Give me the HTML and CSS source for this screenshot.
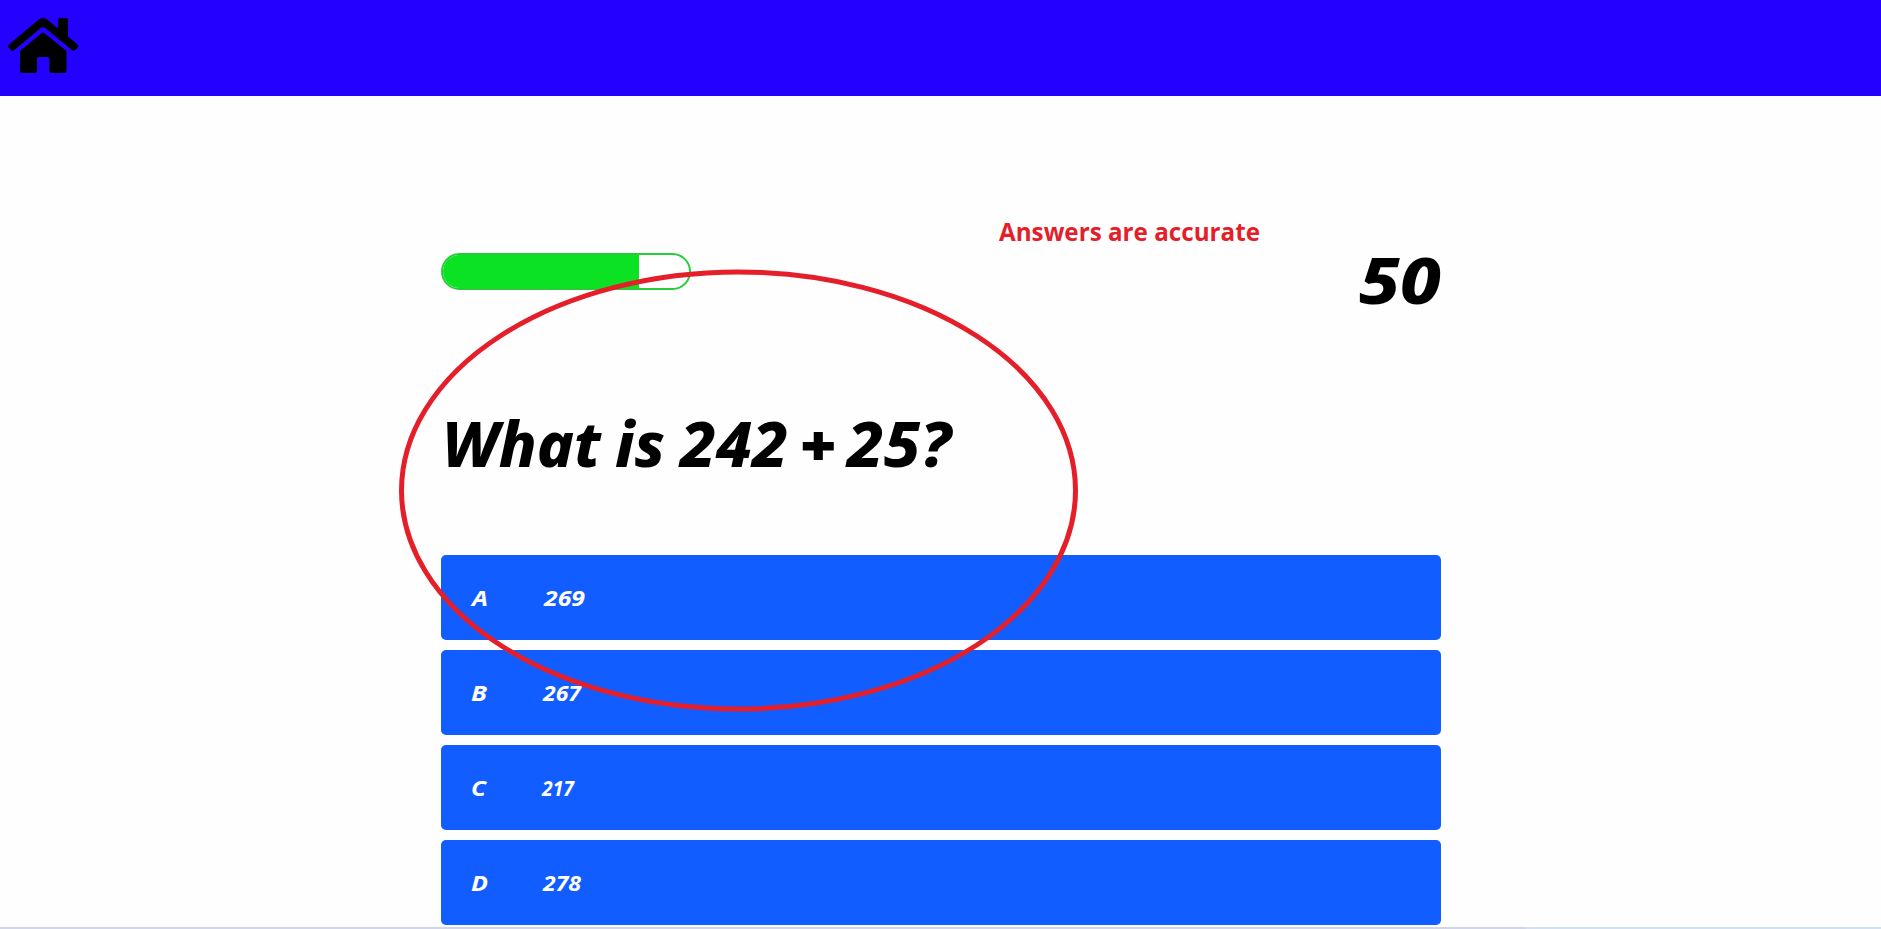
FILE: index.html
```
<!DOCTYPE html>
<html lang="en">
<head>
<meta charset="utf-8">
<title>Quiz</title>
<link rel="stylesheet" href="styles.css">
</head>
<body>
<header class="topbar">
  <svg class="home" viewBox="0 0 70 55">
    <path class="roof" d="M1 26.5 L30.5 1.8 Q35 -1.6 39.5 1.8 L50 10.5 V2 Q50 0 52 0 H58 Q60 0 60 2 V18.5 L69.5 26.5 Q70.8 27.8 69.8 29.2 L67 32.2 Q65.7 33.2 64.2 32.2 L37.5 10.2 Q35 8.3 32.5 10.2 L6 32.2 Q4.5 33.2 3.2 32.2 L0.5 29.2 Q-0.6 27.8 1 26.5Z"/>
    <path d="M12 33 L33.5 15.2 Q35 14 36.5 15.2 L58.5 33 V53 Q58.5 55 56.5 55 H43.3 Q41.3 55 41.3 53 V41 Q41.3 39 39.3 39 H31 Q29 39 29 41 V53 Q29 55 27 55 H14 Q12 55 12 53Z"/>
  </svg>
</header>
<main class="quiz">
  <div class="status">
    <div class="progress"><div class="progress-fill" style="width:196px"></div></div>
    <svg class="score" viewBox="0 0 84 60"><text x="2" y="51" textLength="82" lengthAdjust="spacingAndGlyphs">50</text></svg>
  </div>
  <svg class="question" viewBox="0 0 520 70">
    <text x="-2" y="56.5" textLength="159" lengthAdjust="spacingAndGlyphs">What</text>
    <text x="171" y="56.5" textLength="50" lengthAdjust="spacingAndGlyphs">is</text>
    <text x="236" y="56.5" textLength="108" lengthAdjust="spacingAndGlyphs">242</text>
    <text class="plus" x="357" y="55" textLength="34" lengthAdjust="spacingAndGlyphs">+</text>
    <text x="403" y="56.5" textLength="104" lengthAdjust="spacingAndGlyphs">25?</text>
  </svg>
  <div class="choices">
    <div class="choice"><svg class="letter" viewBox="0 0 69 30"><text x="0" y="23" textLength="16" lengthAdjust="spacingAndGlyphs">A</text></svg><svg class="answer" viewBox="0 0 60 30"><text x="3" y="23" textLength="41" lengthAdjust="spacingAndGlyphs">269</text></svg></div>
    <div class="choice"><svg class="letter" viewBox="0 0 69 30"><text x="-1" y="23" textLength="16" lengthAdjust="spacingAndGlyphs">B</text></svg><svg class="answer" viewBox="0 0 60 30"><text x="2" y="23" textLength="38" lengthAdjust="spacingAndGlyphs">267</text></svg></div>
    <div class="choice"><svg class="letter" viewBox="0 0 69 30"><text x="-1" y="23" textLength="15" lengthAdjust="spacingAndGlyphs">C</text></svg><svg class="answer" viewBox="0 0 60 30"><text x="1" y="23" textLength="32" lengthAdjust="spacingAndGlyphs">217</text></svg></div>
    <div class="choice"><svg class="letter" viewBox="0 0 69 30"><text x="-1" y="23" textLength="17" lengthAdjust="spacingAndGlyphs">D</text></svg><svg class="answer" viewBox="0 0 60 30"><text x="2" y="23" textLength="38" lengthAdjust="spacingAndGlyphs">278</text></svg></div>
  </div>
</main>
<footer class="edge"><div class="edge-end"></div></footer>
<svg class="note" viewBox="0 0 1881 929">
  <ellipse cx="738.5" cy="490.5" rx="337" ry="218.5"/>
  <text x="999" y="241" textLength="261" lengthAdjust="spacingAndGlyphs">Answers are accurate</text>
</svg>
</body>
</html>
```
FILE: styles.css
```
* { box-sizing: border-box; }
body {
  margin: 0;
  height: 929px;
  overflow: hidden;
  display: flex;
  flex-direction: column;
  background: #fefefe;
  color: #000;
  font-family: "Noto Sans", "Open Sans", sans-serif;
}
.topbar {
  height: 96px;
  flex: none;
  padding: 18px 8px;
  background: #2400ff;
}
.home { display: block; width: 70px; height: 55px; overflow: visible; }
.quiz {
  width: 1000px;
  height: 831px;
  flex: none;
  margin-left: 441px;
  padding-top: 157px;
}
.status {
  display: flex;
  justify-content: space-between;
  align-items: flex-start;
}
.progress {
  width: 250px;
  height: 37px;
  border: 2px solid #27cc38;
  border-radius: 19px;
  overflow: hidden;
  background: #fff;
}
.progress-fill { height: 100%; background: #0ce224; }
.score {
  width: 84px;
  height: 60px;
  overflow: visible;
  font-size: 64px;
  font-weight: 800;
  font-style: italic;
}
.question {
  display: block;
  width: 520px;
  height: 70px;
  margin: 97px 0 75px 3px;
  overflow: visible;
  font-size: 63px;
  font-weight: 800;
  font-style: italic;
}
.plus { font-size: 54px; stroke: #000; stroke-width: 2; }
.choices { display: grid; gap: 10px; }
.choice {
  height: 85px;
  border-radius: 5px;
  padding-left: 31px;
  background: #115dff;
  color: #fff;
  display: flex;
  align-items: center;
  font-size: 21.5px;
  font-weight: 700;
  font-style: italic;
}
.letter { width: 69px; height: 30px; overflow: visible; fill: #fff; }
.answer { width: 60px; height: 30px; overflow: visible; fill: #fff; }
.edge {
  height: 2px;
  flex: none;
  background: #d0d5e9;
  display: flex;
  justify-content: flex-end;
}
.edge-end { width: 355px; background: #d3e0f0; }
.note {
  position: absolute;
  left: 0;
  top: 0;
  width: 1881px;
  height: 929px;
  pointer-events: none;
  fill: #e51f2a;
  font-family: "Open Sans", "Noto Sans", sans-serif;
  font-size: 25px;
  font-weight: 700;
}
.note ellipse { fill: none; stroke: #e51f2a; stroke-width: 5; }
```
